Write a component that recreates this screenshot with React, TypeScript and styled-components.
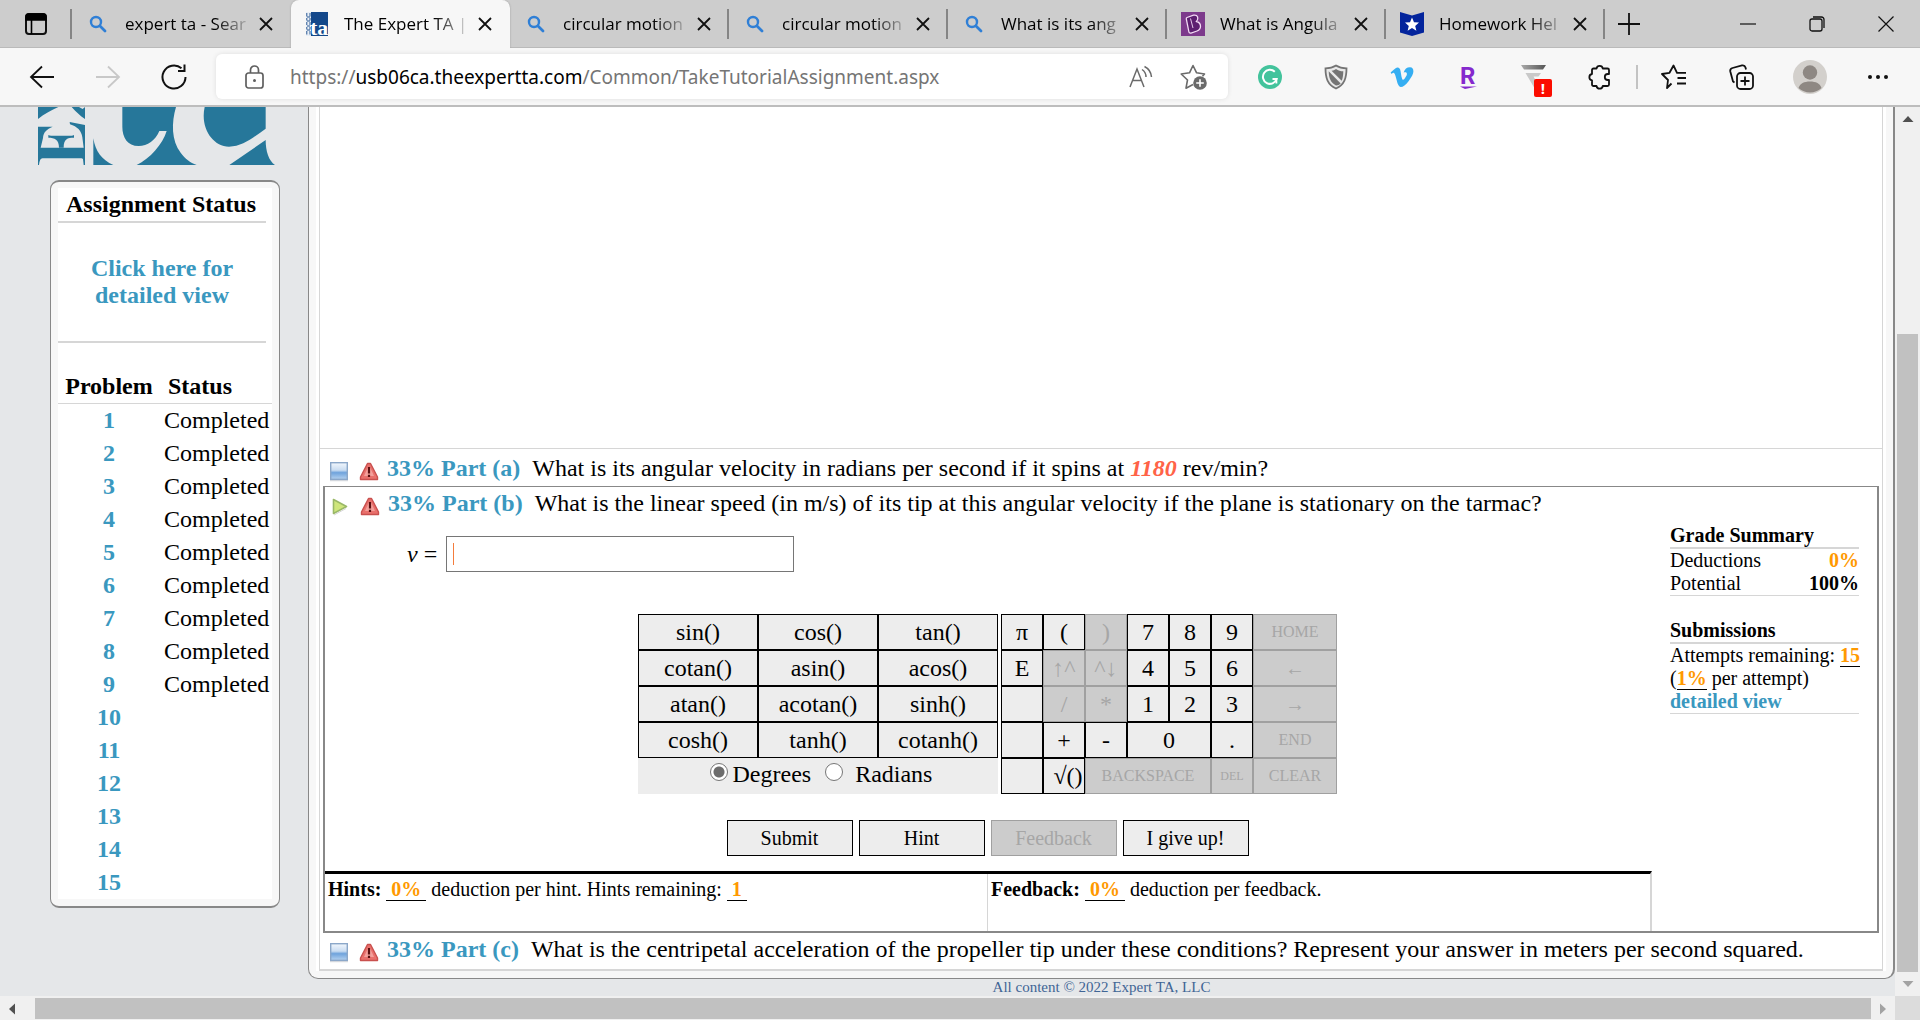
import React from "react";
import styled, { createGlobalStyle, css } from "styled-components";
import { FaVimeoV } from "react-icons/fa";

const serif = '"Liberation Serif", "Times New Roman", serif';
const sans = '"Open Sans", "Noto Sans", sans-serif';
const link = "#3a98bf";
const line = "#d6d6d6";
const edge = "#888888";

const GlobalStyle = createGlobalStyle`
  * { box-sizing: border-box; }
  body { margin: 0; background: #e5e7e9; font-family: ${serif}; color: #000; }
  button { font-family: inherit; color: inherit; padding: 0; margin: 0; }
  a { text-decoration: none; }
`;

/* ---------- window ---------- */

const Window = styled.div`
  min-height: 100vh;
  display: flex;
  flex-direction: column;
`;

const IconButton = styled.button<{ $w?: number; $h?: number }>`
  width: ${(p) => p.$w ?? 24}px;
  height: ${(p) => p.$h ?? 24}px;
  border: 0;
  background: none;
  display: flex;
  align-items: center;
  justify-content: center;
  flex: none;
`;

const TabBar = styled.nav`
  display: flex;
  align-items: center;
  height: 48px;
  background: #cdcdcd;
  border-bottom: 1px solid #bababa;
  font-family: ${sans};
`;

const TabMenu = styled.div`
  width: 72px;
  height: 30px;
  padding-left: 24px;
  display: flex;
  align-items: center;
  border-right: 2px solid #858585;
`;

const Tab = styled.div<{ $active?: boolean; $divider?: boolean }>`
  flex: 0 1 219px;
  min-width: 0;
  height: 30px;
  display: flex;
  align-items: center;
  padding: 0 11px 0 14px;
  border-right: 2px solid ${(p) => (p.$divider ? "#858585" : "transparent")};
  ${(p) =>
    p.$active &&
    css`
      align-self: stretch;
      height: 48px;
      padding-bottom: 1px;
      background: #f7f7f7;
      border-right-color: #f7f7f7;
      border-radius: 8px 8px 0 0;
      box-shadow: 0 0 2px #9a9a9a;
      clip-path: inset(0 -3px 0 -3px);
    `}
`;

const Favicon = styled.span`
  width: 24px;
  height: 24px;
  flex: none;
  display: flex;
  align-items: center;
  justify-content: center;
  margin-right: 15px;
`;

const TabTitle = styled.span`
  flex: 1;
  min-width: 0;
  overflow: hidden;
  white-space: nowrap;
  font-size: 17px;
  line-height: 26px;
  margin-right: 4px;
  mask-image: linear-gradient(to right, #000 72%, rgba(0, 0, 0, 0.15) 98%);
`;

const WindowButtons = styled.div`
  display: flex;
  margin-left: auto;
`;

const Toolbar = styled.header`
  display: flex;
  align-items: center;
  height: 59px;
  padding: 0 24px 0 21px;
  background: #f7f7f7;
  border-bottom: 2px solid #bdbdbd;
  font-family: ${sans};
`;

const NavButtons = styled.div`
  display: flex;
  gap: 24px;
  margin-right: 21px;
`;

const AddressBar = styled.div`
  flex: 1;
  min-width: 0;
  height: 45px;
  display: flex;
  align-items: center;
  padding: 0 7px 0 27px;
  background: #fff;
  border-radius: 6px;
  box-shadow: 0 0 5px rgba(0, 0, 0, 0.1);
`;

const Address = styled.div`
  flex: 1;
  min-width: 0;
  margin-left: 23px;
  overflow: hidden;
  white-space: nowrap;
  font-family: "Noto Sans", ${sans};
  font-size: 19px;
  line-height: 30px;
  color: #757575;
  b {
    font-weight: 400;
    color: #000;
  }
`;

const Extensions = styled.div`
  display: flex;
  align-items: center;
  gap: 30px;
  margin-left: 24px;
`;

const ExtensionButton = styled(IconButton)`
  width: 36px;
  height: 40px;
  position: relative;
`;

const Alert = styled.span`
  position: absolute;
  right: 0;
  bottom: 0;
  width: 18px;
  height: 18px;
  border-radius: 2px;
  background: #fb0d00;
  color: #fff;
  font-size: 15px;
  font-weight: 700;
  line-height: 18px;
  text-align: center;
`;

const ToolbarDivider = styled.span`
  width: 2px;
  height: 24px;
  background: #c3c3c3;
  margin: 0 18px;
`;

const BrowserActions = styled.div`
  display: flex;
  align-items: center;
  gap: 32px;
`;

/* ---------- scrolling page area ---------- */

const Viewport = styled.div`
  flex: 1;
  display: grid;
  grid-template-columns: minmax(0, 1fr) 25px;
  grid-template-rows: 1fr 24px;
`;

const Track = styled.div<{ $vertical?: boolean }>`
  display: flex;
  flex-direction: ${(p) => (p.$vertical ? "column" : "row")};
  background: #f0f0f0;
  padding: ${(p) => (p.$vertical ? "0 2px" : "2px 0 1px")};
`;

const TrackArrow = styled.span`
  flex: 0 0 24px;
  display: flex;
  align-items: center;
  justify-content: center;
`;

const TrackGap = styled.span<{ $grow: number }>`
  flex: ${(p) => p.$grow} 1 0;
`;

const Thumb = styled.span<{ $grow: number }>`
  flex: ${(p) => p.$grow} 1 0;
  background: #c1c1c1;
`;

const Corner = styled.div`
  background: #dcdcdc;
`;

const Page = styled.div`
  display: flex;
  align-items: flex-start;
  background: #e5e7e9;
`;

/* ---------- sidebar ---------- */

const Sidebar = styled.aside`
  flex: 0 0 308px;
  padding: 0 28px 0 50px;
`;

const Logo = styled.a`
  display: block;
  margin: 0 5px 15px -12px;
  svg {
    display: block;
  }
`;

const StatusPanel = styled.section`
  padding: 6px 7px 7px;
  background: #f7f7f7;
  border: 1px solid ${edge};
  border-width: 2px 1px;
  border-radius: 9px;
`;

const StatusBody = styled.div`
  background: #fff;
  font-size: 24px;
`;

const StatusTitle = styled.h2`
  margin: 0 6px 0 0;
  padding: 0 2px 1px 0;
  font-size: 24px;
  line-height: 32px;
  text-align: center;
  border-bottom: 2px solid ${line};
  white-space: nowrap;
`;

const DetailedLink = styled.a`
  display: block;
  margin: 0 6px 27px 0;
  padding: 32px 28px;
  line-height: 27px;
  font-weight: 700;
  text-align: center;
  color: ${link};
  border-bottom: 2px solid ${line};
`;

const StatusTable = styled.table`
  width: 100%;
  border-collapse: separate;
  border-spacing: 0;
  table-layout: fixed;
  th {
    padding: 0 0 1px;
    line-height: 32px;
    border-bottom: 1px solid ${line};
  }
  th:first-child {
    width: 102px;
  }
  th:last-child {
    text-align: left;
    padding-left: 8px;
  }
  td {
    padding: 0;
    height: 33px;
    line-height: 33px;
    text-align: center;
  }
  td:last-child {
    text-align: left;
    padding-left: 4px;
  }
  a {
    font-weight: 700;
    color: ${link};
  }
`;

/* ---------- main panel ---------- */

const Main = styled.main`
  flex: 1;
  min-width: 0;
`;

const MainFrame = styled.div`
  padding: 0 7px 7px;
  background: #f7f7f7;
  border: 1px solid ${edge};
  border-top: 0;
  border-right-width: 2px;
  border-radius: 0 0 10px 10px;
`;

const MainBody = styled.div`
  padding: 0 3px;
  background: #fff;
`;

const Problem = styled.div`
  border: 1px solid ${line};
  border-top: 0;
  border-bottom-width: 2px;
`;

const ProblemFigure = styled.div`
  min-height: 342px;
  border-bottom: 1px solid ${line};
`;

const PartRow = styled.div<{ $pad: string }>`
  display: flex;
  align-items: flex-end;
  padding: ${(p) => p.$pad};
  font-size: 24px;
  line-height: 32px;
  svg {
    flex: none;
    display: block;
    margin-bottom: 2px;
  }
  svg + svg {
    margin: 0 8px 2px 10px;
  }
`;

const PartLink = styled.a`
  font-weight: 700;
  color: ${link};
  margin-right: 12px;
  white-space: nowrap;
`;

const PartText = styled.span`
  em {
    font-weight: 700;
    color: #ff6347;
  }
`;

const ActivePart = styled.section`
  margin: 0 3px;
  border: 2px solid ${edge};
  border-top-width: 1px;
`;

const PartBody = styled.div`
  display: flex;
  align-items: stretch;
`;

const Work = styled.div`
  flex: 1;
  min-width: 0;
`;

const AnswerRow = styled.div`
  display: flex;
  align-items: flex-start;
  gap: 9px;
  padding: 17px 0 42px 82px;
  font-size: 24px;
  line-height: 36px;
`;

const AnswerField = styled.div`
  display: flex;
  align-items: center;
  width: 348px;
  height: 36px;
  padding: 0 6px;
  background: #fff;
  border: 1px solid #767676;
`;

const Caret = styled.span`
  width: 1px;
  height: 22px;
  background: #f47c3c;
`;

const AnswerInput = styled.input`
  flex: 1;
  min-width: 0;
  border: 0;
  outline: 0;
  padding: 0;
  background: none;
  font: 24px ${serif};
`;

const Keypad = styled.div`
  display: flex;
  justify-content: center;
  gap: 3px;
  padding-right: 2px;
`;

const FunctionKeys = styled.div`
  display: grid;
  grid-template-columns: repeat(3, 120px);
  grid-auto-rows: 36px;
`;

const NumberKeys = styled.div`
  display: grid;
  grid-template-columns: repeat(6, 42px) 84px;
  grid-auto-rows: 36px;
`;

const Key = styled.button<{ $span?: number; $size?: number; $indent?: number }>`
  grid-column: span ${(p) => p.$span ?? 1};
  min-width: 0;
  padding-left: ${(p) => p.$indent ?? 0}px;
  border: 1px solid #000;
  background: #ededed;
  font-size: ${(p) => p.$size ?? 24}px;
  line-height: 34px;
  white-space: nowrap;
  &:disabled {
    background: #cccccc;
    border-color: #a0a0a0;
    color: #a6a6a6;
  }
`;

const AngleModes = styled.div`
  grid-column: 1 / -1;
  display: flex;
  justify-content: center;
  gap: 14px;
  padding-left: 6px;
  background: #ededed;
  font-size: 24px;
  line-height: 33px;
`;

const AngleLabel = styled.label<{ $gap: number }>`
  display: flex;
  gap: ${(p) => p.$gap}px;
`;

const Radio = styled.input`
  appearance: none;
  width: 18px;
  height: 18px;
  margin: 5px 0 0;
  border: 1px solid #767676;
  border-radius: 50%;
  background: #fff;
  &:checked {
    background: radial-gradient(circle, #6c6c6c 0 5px, #fff 6px);
  }
`;

const Actions = styled.div`
  display: flex;
  justify-content: center;
  gap: 6px;
  padding: 26px 2px 15px 0;
`;

const ActionButton = styled(Key)`
  width: 126px;
  height: 36px;
`;

const Deductions = styled.div`
  display: flex;
  border-top: 3px solid #000;
  border-right: 2px solid ${line};
`;

const Deduction = styled.p`
  flex: 1;
  margin: 0;
  padding: 0 3px;
  min-height: 57px;
  font-size: 20px;
  line-height: 30px;
  & + & {
    border-left: 1px solid ${line};
  }
`;

const Amount = styled.b<{ $underlined?: boolean }>`
  color: #ff9900;
  border-bottom: ${(p) => (p.$underlined ? "1px solid #000" : "0")};
`;

const Summary = styled.aside`
  width: 225px;
  padding: 5px 18px;
  font-size: 20px;
  line-height: 23px;
  white-space: nowrap;
`;

const SummaryBlock = styled.section`
  border-bottom: 1px solid ${line};
  margin-bottom: 23px;
  a {
    font-weight: 700;
    color: ${link};
  }
`;

const SummaryTitle = styled.h3`
  margin: 0;
  font-size: 20px;
  line-height: 23px;
  border-bottom: 2px solid ${line};
`;

const SummaryLine = styled.div`
  display: flex;
  justify-content: space-between;
`;

const Footer = styled.footer`
  font-size: 15px;
  line-height: 17px;
  text-align: center;
  color: #3f6595;
`;

/* ---------- drawings ---------- */

const stroke = { fill: "none", stroke: "#111", strokeWidth: 1.8 } as const;

const CloseIcon = () => (
  <svg width="14" height="14" viewBox="0 0 14 14" {...stroke}>
    <path d="M1 1l12 12M13 1L1 13" />
  </svg>
);

const SearchIcon = () => (
  <svg width="18" height="18" viewBox="0 0 18 18" fill="none" stroke="#2f7fd6">
    <circle cx="7" cy="7" r="5" strokeWidth="2.4" />
    <path d="M11 11l5 5" strokeWidth="2.8" strokeLinecap="round" />
  </svg>
);

const ExpertIcon = () => (
  <svg width="22" height="24" viewBox="0 0 22 24">
    <rect x="4" width="18" height="24" fill="#14488a" />
    <rect width="5" height="24" fill="#e8eef5" />
    <path d="M0.800 1v3.500M4 1v3.500M0.800 6v2.500M4 6v2.500M0.800 10v3M4 10v3M0.800 15v2.500M4 15v2.500M0.800 19v3.500M4 19v3.500M1 5h3M1 9h3M1 14h3M1 18h3" stroke="#14488a" strokeWidth="0.900" />
    <text x="4" y="23" fontSize="22" fontWeight="700" fontFamily="Liberation Serif, serif" fill="#fff">ta</text>
  </svg>
);

const BIcon = () => (
  <svg width="24" height="24" viewBox="0 0 24 24">
    <rect width="24" height="24" fill="#7d3a8c" />
    <path d="M6 5.500L12.500 3.200C17 2.500 18 6.500 15.500 9.500C21 11 20.500 17.500 16 19L10 21C8.500 21.300 8 20.600 7.800 19.500L5.300 7C5.200 6.200 5.400 5.800 6 5.500Z" fill="#5d1f70" stroke="#f3dcf5" strokeWidth="1.300" />
    <path d="M9.500 6.500L12 16" stroke="#f3dcf5" strokeWidth="0.900" />
  </svg>
);

const StarBadgeIcon = () => (
  <svg width="24" height="24" viewBox="0 0 24 24">
    <path d="M0 0L12 3.500L24 0V20.500L12 24L0 20.500Z" fill="#03249c" />
    <path d="M12 5.500l2 4.700 5 .4-3.800 3.300 1.200 4.900-4.400-2.700-4.400 2.700 1.200-4.900L5 10.600l5-.4z" fill="#fff" />
  </svg>
);

const TabMenuIcon = () => (
  <svg width="24" height="24" viewBox="0 0 24 24">
    <rect x="2" y="2" width="20" height="20" rx="3" {...stroke} strokeWidth="2" />
    <path d="M2 8V5a3 3 0 013-3h14a3 3 0 013 3v3z" fill="#000" stroke="#000" strokeWidth="1.600" />
    <path d="M7.500 8v14" stroke="#000" strokeWidth="1.600" />
  </svg>
);

const Arrow = ({ color, flip }: { color: string; flip?: boolean }) => (
  <svg width="26" height="24" viewBox="0 0 26 24" fill="none" stroke={color} strokeWidth="1.800">
    <path d={flip ? "M1 12h23M13 1.500L24 12 13 22.500" : "M25 12H2M13 1.500L2 12l11 10.500"} />
  </svg>
);

const ReloadIcon = () => (
  <svg width="26" height="26" viewBox="0 0 26 26" {...stroke} strokeWidth="2">
    <path d="M24.500 13a11.500 11.500 0 11-4-8.700" />
    <path d="M23.500 0.500V7H17" />
  </svg>
);

const LockIcon = () => (
  <svg width="20" height="24" viewBox="0 0 20 24" fill="none" stroke="#5f5f5f" strokeWidth="1.700">
    <rect x="1" y="8" width="17" height="15" rx="2.500" />
    <path d="M5.500 8V5a4 4 0 018 0v3" />
    <circle cx="9.500" cy="15.500" r="1.500" fill="#5f5f5f" stroke="none" />
  </svg>
);

const ReadAloudIcon = () => (
  <svg width="24" height="24" viewBox="0 0 24 24" fill="none" stroke="#6a6a6a" strokeWidth="1.500">
    <path d="M1 22L8 4l7 18M3.500 15.500h9M13 4.500a9 9 0 014 7.500M15.500 1.500A13 13 0 0122.500 12" />
  </svg>
);

const AddStarIcon = () => (
  <svg width="28" height="26" viewBox="0 0 28 26" fill="none" stroke="#6a6a6a" strokeWidth="1.600">
    <path d="M13 20.500L6 24.200 7.500 16 1.200 10l8.300-1.200L13 1.500l3.600 7.300L24.500 10l-2 2.200" strokeLinejoin="round" />
    <circle cx="20" cy="19" r="6.800" fill="#6a6a6a" stroke="none" />
    <path d="M20 15.200v7.600M16.200 19h7.600" stroke="#fff" />
  </svg>
);

const GrammarlyIcon = () => (
  <svg width="24" height="24" viewBox="0 0 24 24">
    <circle cx="12" cy="12" r="12" fill="#43c39c" />
    <path d="M16.800 6.800A7 7 0 1018.600 14H14.500" fill="none" stroke="#fff" strokeWidth="2" />
    <path d="M18.400 13.500v5" stroke="#fff" strokeWidth="1.800" />
  </svg>
);

const ShieldIcon = () => (
  <svg width="24" height="26" viewBox="0 0 24 26">
    <path d="M12 1.500C8.500 3.800 5 4.300 1.500 4.300 1.500 14 3.500 20.500 12 24.500 20.500 20.500 22.500 14 22.500 4.300 19 4.300 15.500 3.800 12 1.500Z" fill="#e9e9e9" stroke="#747474" strokeWidth="1.800" />
    <path d="M7.500 6.800C10 6.300 11 5.600 12 4.900c2.300 1.600 4.600 2.200 7.300 2.400-.1 4.200-.6 7.200-1.600 9.500z" fill="#747474" />
    <path d="M4.700 7.300l12 12.200c-1.200 1.200-2.700 2-4.700 2C6.500 18.500 4.900 14 4.700 7.300Z" fill="#747474" />
  </svg>
);

const RakutenIcon = () => (
  <svg width="20" height="26" viewBox="0 0 20 26">
    <text x="2" y="20" fontSize="24" fontWeight="700" fontFamily="Roboto, sans-serif" fill="#8529cd">R</text>
    <path d="M2 22.500H19L7 25Z" fill="#8529cd" />
  </svg>
);

const FunnelIcon = () => (
  <svg width="26" height="26" viewBox="0 0 26 26">
    <defs>
      <linearGradient id="funnel" x1="0" x2="1">
        <stop offset="0" stopColor="#aaa" />
        <stop offset="1" stopColor="#555" />
      </linearGradient>
    </defs>
    <path d="M0 1H25L22 5.500H3Z" fill="url(#funnel)" />
    <path d="M4.500 9H20l-2.500 3.500h-5L15 17l-1 8z" fill="#c9c9c9" />
  </svg>
);

const PuzzleIcon = () => (
  <svg width="26" height="26" viewBox="0 0 26 26" {...stroke} strokeLinejoin="round">
    <path d="M6.500 4.500H9.500A3.200 3.200 0 0115.800 4.500H20.500A1.500 1.500 0 0122 6V10H20.800A3 3 0 0020.800 16H22V20.500A1.500 1.500 0 0120.500 22H15.800A3.200 3.200 0 019.500 22H6.500A1.500 1.500 0 015 20.500V16.300A3.200 3.200 0 015 10V6A1.500 1.500 0 016.500 4.500Z" />
  </svg>
);

const FavoritesIcon = () => (
  <svg width="26" height="26" viewBox="0 0 26 26" {...stroke} strokeLinejoin="round">
    <path d="M10.500 19.500L6 24 7 16 1 10l7.500-1.200L12.500 1.500 16 8.800h9M16.500 14H25M16 19.500h9" />
  </svg>
);

const CollectionsIcon = () => (
  <svg width="26" height="26" viewBox="0 0 26 26" {...stroke}>
    <path d="M5.500 18.500L4 17.500 1.300 7.500A3 3 0 013.500 4L13 1.400A3 3 0 0116.500 3.500L17 5.500" />
    <rect x="8" y="9" width="16" height="16" rx="3.500" />
    <path d="M16 12.500v9M11.500 17h9" />
  </svg>
);

const AvatarIcon = () => (
  <svg width="34" height="34" viewBox="0 0 34 34">
    <circle cx="17" cy="17" r="17" fill="#d3d0cc" />
    <circle cx="17" cy="12.500" r="7.200" fill="#8e8883" />
    <path d="M5.500 28C7 23.500 11 21.500 17 21.500S27 23.500 28.500 28A17 17 0 015.500 28Z" fill="#8e8883" />
  </svg>
);

const DotsIcon = () => (
  <svg width="22" height="6" viewBox="0 0 22 6" fill="#111">
    <circle cx="3" cy="3" r="2" />
    <circle cx="11" cy="3" r="2" />
    <circle cx="19" cy="3" r="2" />
  </svg>
);

const Triangle = ({ dir, color }: { dir: "up" | "down" | "left" | "right"; color: string }) => {
  const turn = { up: 0, right: 90, down: 180, left: 270 }[dir];
  return (
    <svg width="12" height="12" viewBox="0 0 12 12">
      <path d="M0.500 9L6 3l5.500 6z" fill={color} transform={`rotate(${turn} 6 6)`} />
    </svg>
  );
};

const BrandMark = () => (
  <svg width="237" height="58" viewBox="24 21 711 174" preserveAspectRatio="none" role="img" aria-label="Expert TA">
    <g fill="#26779a">
      <path d="M24 21H85C64 31 44 41 24 57Z" />
      <path d="M125 21H147L158 27 165 21V57C150 48 138 35 125 21Z" />
      <path d="M24 80H68C50 88 40 96 39 114L32 143H161L157 112C154 92 142 80 120 73L119 66 165 75V195H161L159 178C158 175 156 175 152 175H40C33 175 30 176 27 195H24Z" />
      <path d="M55 105Q60 108 66 107H122Q128 108 132 105V113C112 113 101 116 101 143H87C87 118 74 113 55 113Z" />
      <path d="M190 115C196 154 216 181 250 195H190Z" />
      <path d="M277 21H438C424 68 424 122 452 158C466 177 480 187 500 195H320C360 176 398 132 410 93H388C377 121 352 138 326 138C292 138 277 112 277 80Z" />
      <path d="M524 21H707V86C672 110 640 140 597 140C548 140 510 84 524 21Z" />
      <path d="M707 120C707 154 716 182 735 195H598Z" />
    </g>
  </svg>
);

const SquareIcon = () => (
  <svg width="20" height="20" viewBox="0 0 20 20">
    <defs>
      <linearGradient id="square" x1="0" x2="0" y1="0" y2="1">
        <stop offset="0" stopColor="#f2f7fd" />
        <stop offset="0.450" stopColor="#c9dcf1" />
        <stop offset="0.600" stopColor="#6fa3dc" />
        <stop offset="1" stopColor="#b5d2f0" />
      </linearGradient>
    </defs>
    <rect x="1.700" y="0.700" width="16.600" height="16.600" fill="url(#square)" stroke="#8ba7c9" strokeWidth="1.400" />
    <path d="M1 18.700H19" stroke="#c9ced6" />
  </svg>
);

const PlayIcon = () => (
  <svg width="20" height="20" viewBox="0 0 20 20">
    <path d="M3.500 2.500V16.500L16.500 9.500Z" fill="#cfe67c" stroke="#9ab868" strokeWidth="1.600" strokeLinejoin="round" />
    <path d="M4 18L16 11.500" stroke="#d5d5d5" />
  </svg>
);

const WarningIcon = () => (
  <svg width="20" height="20" viewBox="0 0 20 20">
    <path d="M8.500 1.500h3L18.500 15v2.500h-17V15Z" fill="#e9706c" stroke="#c9504e" strokeWidth="1.400" strokeLinejoin="round" />
    <path d="M9 5h2l4 9H5z" fill="#f4a09b" />
    <path d="M8.900 5h2.200v6.500H8.900zM8.900 12.800h2.200V15H8.900z" fill="#5a1010" />
  </svg>
);

/* ---------- data ---------- */

const tabs = [
  { title: "expert ta - Sear", icon: <SearchIcon /> },
  { title: "The Expert TA |", icon: <ExpertIcon />, active: true },
  { title: "circular motion", icon: <SearchIcon />, divider: true },
  { title: "circular motion", icon: <SearchIcon />, divider: true },
  { title: "What is its ang", icon: <SearchIcon />, divider: true },
  { title: "What is Angula", icon: <BIcon />, divider: true },
  { title: "Homework Hel", icon: <StarBadgeIcon />, divider: true },
];

const functionKeys = [
  "sin()", "cos()", "tan()", "cotan()", "asin()", "acos()",
  "atan()", "acotan()", "sinh()", "cosh()", "tanh()", "cotanh()",
];

type KeySpec = { t: string; off?: boolean; span?: number; size?: number; indent?: number; name?: string };

const numberKeys: KeySpec[] = [
  { t: "π" }, { t: "(" }, { t: ")", off: true }, { t: "7" }, { t: "8" }, { t: "9" }, { t: "HOME", off: true, size: 16 },
  { t: "E" }, { t: "↑^", off: true }, { t: "^↓", off: true }, { t: "4" }, { t: "5" }, { t: "6" }, { t: "←", off: true, size: 20 },
  { t: "", name: "blank" }, { t: "/", off: true }, { t: "*", off: true }, { t: "1" }, { t: "2" }, { t: "3" }, { t: "→", off: true, size: 20 },
  { t: "", name: "blank" }, { t: "+" }, { t: "-" }, { t: "0", span: 2 }, { t: "." }, { t: "END", off: true, size: 16 },
  { t: "", name: "blank" }, { t: "√()", indent: 8 }, { t: "BACKSPACE", off: true, size: 16, span: 3 }, { t: "DEL", off: true, size: 12 }, { t: "CLEAR", off: true, size: 16 },
];

const problems = Array.from({ length: 15 }, (_, i) => ({ n: i + 1, status: i < 9 ? "Completed" : "" }));

/* ---------- sections ---------- */

const BrowserChrome = () => (
  <>
    <TabBar>
      <TabMenu>
        <IconButton aria-label="Tab actions"><TabMenuIcon /></IconButton>
      </TabMenu>
      {tabs.map((t, i) => (
        <Tab key={i} $active={t.active} $divider={t.divider}>
          <Favicon>{t.icon}</Favicon>
          <TabTitle>{t.title}</TabTitle>
          <IconButton aria-label="Close tab"><CloseIcon /></IconButton>
        </Tab>
      ))}
      <IconButton $w={48} aria-label="New tab">
        <svg width="22" height="22" viewBox="0 0 22 22" {...stroke}><path d="M11 0v22M0 11h22" /></svg>
      </IconButton>
      <WindowButtons>
        <IconButton $w={69} aria-label="Minimize">
          <svg width="16" height="16" viewBox="0 0 16 16" {...stroke} strokeWidth="1.200"><path d="M0 8h16" /></svg>
        </IconButton>
        <IconButton $w={69} aria-label="Restore">
          <svg width="16" height="16" viewBox="0 0 16 16" {...stroke} strokeWidth="1.300">
            <rect x="1" y="3" width="12" height="12" rx="2" />
            <path d="M4 1h8.500A2.500 2.500 0 0115 3.500V12" />
          </svg>
        </IconButton>
        <IconButton $w={69} aria-label="Close window">
          <svg width="16" height="16" viewBox="0 0 16 16" {...stroke} strokeWidth="1.200"><path d="M0.500 0.500l15 15M15.500 0.500l-15 15" /></svg>
        </IconButton>
      </WindowButtons>
    </TabBar>
    <Toolbar>
      <NavButtons>
        <IconButton $w={42} $h={40} aria-label="Back"><Arrow color="#111" /></IconButton>
        <IconButton $w={42} $h={40} aria-label="Forward"><Arrow color="#c8c8c8" flip /></IconButton>
        <IconButton $w={42} $h={40} aria-label="Reload"><ReloadIcon /></IconButton>
      </NavButtons>
      <AddressBar>
        <IconButton aria-label="Site information"><LockIcon /></IconButton>
        <Address role="textbox" aria-label="Address" tabIndex={0}>
          https://<b>usb06ca.theexpertta.com</b>/Common/TakeTutorialAssignment.aspx
        </Address>
        <IconButton $w={52} aria-label="Read aloud"><ReadAloudIcon /></IconButton>
        <IconButton $w={54} aria-label="Add to favorites"><AddStarIcon /></IconButton>
      </AddressBar>
      <Extensions>
        <ExtensionButton aria-label="Grammarly"><GrammarlyIcon /></ExtensionButton>
        <ExtensionButton aria-label="Shield"><ShieldIcon /></ExtensionButton>
        <ExtensionButton aria-label="Vimeo"><FaVimeoV size={26} color="#35aef2" /></ExtensionButton>
        <ExtensionButton aria-label="Rakuten"><RakutenIcon /></ExtensionButton>
        <ExtensionButton aria-label="Filter"><FunnelIcon /><Alert>!</Alert></ExtensionButton>
        <ExtensionButton aria-label="Extensions"><PuzzleIcon /></ExtensionButton>
      </Extensions>
      <ToolbarDivider />
      <BrowserActions>
        <ExtensionButton aria-label="Favorites"><FavoritesIcon /></ExtensionButton>
        <ExtensionButton aria-label="Collections"><CollectionsIcon /></ExtensionButton>
        <ExtensionButton aria-label="Profile"><AvatarIcon /></ExtensionButton>
        <ExtensionButton aria-label="More"><DotsIcon /></ExtensionButton>
      </BrowserActions>
    </Toolbar>
  </>
);

const AssignmentStatus = () => (
  <Sidebar>
    <Logo href="#home"><BrandMark /></Logo>
    <StatusPanel>
      <StatusBody>
        <StatusTitle>Assignment Status</StatusTitle>
        <DetailedLink href="#detail">Click here for detailed view</DetailedLink>
        <StatusTable>
          <thead>
            <tr><th>Problem</th><th>Status</th></tr>
          </thead>
          <tbody>
            {problems.map((p) => (
              <tr key={p.n}>
                <td><a href={`#problem-${p.n}`}>{p.n}</a></td>
                <td>{p.status}</td>
              </tr>
            ))}
          </tbody>
        </StatusTable>
      </StatusBody>
    </StatusPanel>
  </Sidebar>
);

const GradeSummary = () => (
  <Summary>
    <SummaryBlock>
      <SummaryTitle>Grade Summary</SummaryTitle>
      <SummaryLine><span>Deductions</span><Amount>0%</Amount></SummaryLine>
      <SummaryLine><span>Potential</span><b>100%</b></SummaryLine>
    </SummaryBlock>
    <SummaryBlock>
      <SummaryTitle>Submissions</SummaryTitle>
      <div>Attempts remaining: <Amount $underlined>15</Amount></div>
      <div>(<Amount $underlined>1%</Amount> per attempt)</div>
      <a href="#attempts">detailed view</a>
    </SummaryBlock>
  </Summary>
);

const Calculator = () => (
  <Keypad>
    <FunctionKeys>
      {functionKeys.map((k) => <Key key={k}>{k}</Key>)}
      <AngleModes>
        <AngleLabel $gap={5}><Radio type="radio" name="angle" defaultChecked />Degrees</AngleLabel>
        <AngleLabel $gap={12}><Radio type="radio" name="angle" />Radians</AngleLabel>
      </AngleModes>
    </FunctionKeys>
    <NumberKeys>
      {numberKeys.map((k, i) => (
        <Key key={i} disabled={k.off} $span={k.span} $size={k.size} $indent={k.indent} aria-label={k.name}>{k.t}</Key>
      ))}
    </NumberKeys>
  </Keypad>
);

export default function App() {
  return (
    <Window>
      <GlobalStyle />
      <BrowserChrome />
      <Viewport>
        <Page>
          <AssignmentStatus />
          <Main>
            <MainFrame>
              <MainBody>
                <Problem>
                  <ProblemFigure />
                  <PartRow $pad="3px 10px 2px 9px">
                    <SquareIcon /><WarningIcon />
                    <PartLink href="#a">33% Part (a)</PartLink>
                    <PartText>What is its angular velocity in radians per second if it spins at <em>1180</em> rev/min?</PartText>
                  </PartRow>
                  <ActivePart>
                    <PartRow $pad="0 10px 0 5px">
                      <PlayIcon /><WarningIcon />
                      <PartLink href="#b">33% Part (b)</PartLink>
                      <PartText>What is the linear speed (in m/s) of its tip at this angular velocity if the plane is stationary on the tarmac?</PartText>
                    </PartRow>
                    <PartBody>
                      <Work>
                        <AnswerRow>
                          <label htmlFor="answer"><i>v</i> =</label>
                          <AnswerField>
                            <Caret />
                            <AnswerInput id="answer" type="text" />
                          </AnswerField>
                        </AnswerRow>
                        <Calculator />
                        <Actions>
                          <ActionButton $size={20}>Submit</ActionButton>
                          <ActionButton $size={20}>Hint</ActionButton>
                          <ActionButton $size={20} disabled>Feedback</ActionButton>
                          <ActionButton $size={20}>I give up!</ActionButton>
                        </Actions>
                        <Deductions>
                          <Deduction>
                            <b>Hints:</b> <Amount $underlined>&nbsp;0%&nbsp;</Amount> deduction per hint. Hints remaining: <Amount $underlined>&nbsp;1&nbsp;</Amount>
                          </Deduction>
                          <Deduction>
                            <b>Feedback:</b> <Amount $underlined>&nbsp;0%&nbsp;</Amount> deduction per feedback.
                          </Deduction>
                        </Deductions>
                      </Work>
                      <GradeSummary />
                    </PartBody>
                  </ActivePart>
                  <PartRow $pad="0 10px 4px 9px">
                    <SquareIcon /><WarningIcon />
                    <PartLink href="#c">33% Part (c)</PartLink>
                    <PartText>What is the centripetal acceleration of the propeller tip under these conditions? Represent your answer in meters per second squared.</PartText>
                  </PartRow>
                </Problem>
              </MainBody>
            </MainFrame>
            <Footer>All content © 2022 Expert TA, LLC</Footer>
          </Main>
        </Page>
        <Track $vertical>
          <TrackArrow><Triangle dir="up" color="#505050" /></TrackArrow>
          <TrackGap $grow={203} />
          <Thumb $grow={637} />
          <TrackArrow><Triangle dir="down" color="#a3a3a3" /></TrackArrow>
        </Track>
        <Track>
          <TrackArrow><Triangle dir="left" color="#505050" /></TrackArrow>
          <TrackGap $grow={11} />
          <Thumb $grow={1836} />
          <TrackArrow><Triangle dir="right" color="#a3a3a3" /></TrackArrow>
        </Track>
        <Corner />
      </Viewport>
    </Window>
  );
}
